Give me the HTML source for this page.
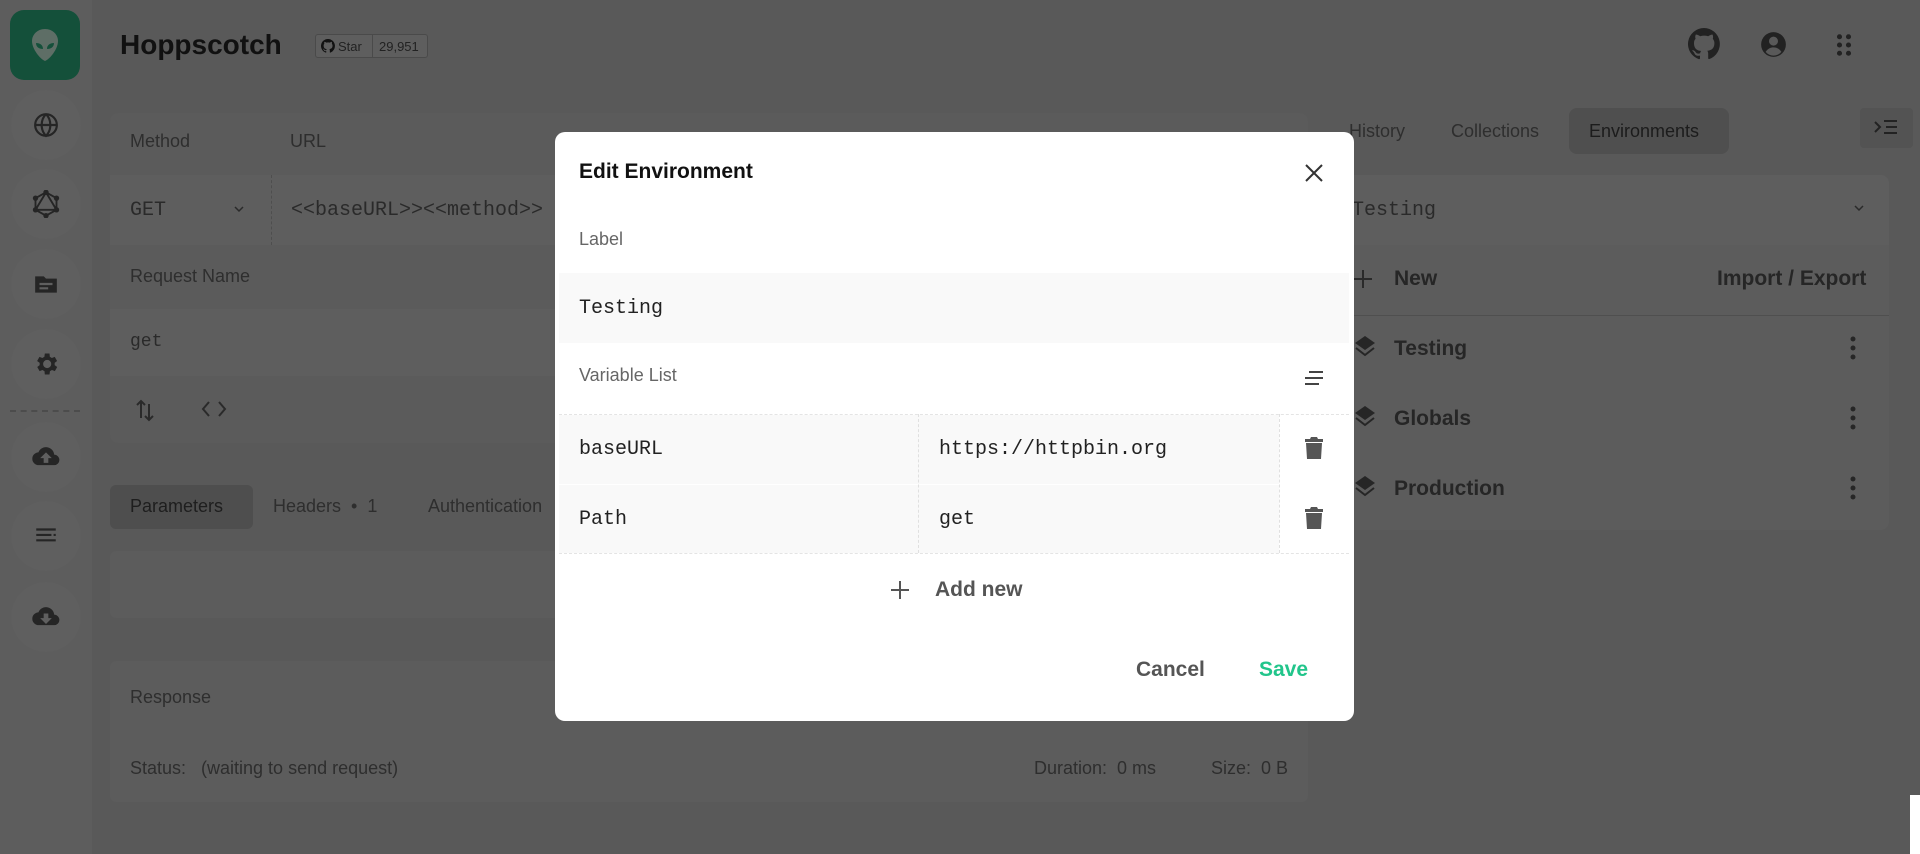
<!DOCTYPE html>
<html><head><meta charset="utf-8"><style>
*{box-sizing:border-box;margin:0;padding:0}
body{width:1920px;height:854px;overflow:hidden;background:#595959;font-family:"Liberation Sans",sans-serif;position:relative;color:#222}
.a{position:absolute}
.mono{font-family:"Liberation Mono",monospace}
.side{left:0;top:0;width:92px;height:854px;background:#5d5d5d}
.circ{left:11px;width:70px;height:70px;border-radius:50%;background:#5f5f5f;display:flex;align-items:center;justify-content:center}
.lbl{color:#2e2e2e;font-size:18px}
.txt{color:#2a2a2a}
</style></head><body>
<div class="a side"></div>
<div class="a" style="left:10px;top:10px;width:70px;height:70px;border-radius:14px;background:#14503a;display:flex;align-items:center;justify-content:center">
<svg width="30" height="34" viewBox="0 0 30 34"><path d="M15 1C7 1 2 7 2 13c0 8 8 18 13 20 5-2 13-12 13-20C28 7 23 1 15 1z" fill="#5e6e66"/><path d="M6 15c4 0 7 2 7 6-4 0-7-2-7-6zM24 15c-4 0-7 2-7 6 4 0 7-2 7-6z" fill="#14503a"/></svg></div>
<div class="a circ" style="top:90px"><svg width="26" height="26" viewBox="0 0 24 24" fill="none" stroke="#252525" stroke-width="2"><circle cx="12" cy="12" r="10"/><path d="M2 12h20M12 2c3 3 4 6 4 10s-1 7-4 10c-3-3-4-6-4-10s1-7 4-10"/></svg></div>
<div class="a circ" style="top:169px"><svg width="28" height="28" viewBox="0 0 24 24" fill="none" stroke="#252525" stroke-width="1.6"><path d="M12 2l9 5v10l-9 5-9-5V7zM12 2L3 17h18z"/><circle cx="12" cy="2" r="1.5" fill="#252525"/><circle cx="21" cy="7" r="1.5" fill="#252525"/><circle cx="21" cy="17" r="1.5" fill="#252525"/><circle cx="12" cy="22" r="1.5" fill="#252525"/><circle cx="3" cy="17" r="1.5" fill="#252525"/><circle cx="3" cy="7" r="1.5" fill="#252525"/></svg></div>
<div class="a circ" style="top:249px"><svg width="26" height="26" viewBox="0 0 24 24"><path d="M2 5h8l2 2h10v13H2z" fill="#252525"/><path d="M6 12h12M6 16h8" stroke="#5f5f5f" stroke-width="2"/></svg></div>
<div class="a circ" style="top:329px"><svg width="28" height="28" viewBox="0 0 24 24"><path fill="#252525" d="M19.4 13a7.5 7.5 0 000-2l2.1-1.6-2-3.5-2.5 1a7 7 0 00-1.7-1L15 3h-4l-.4 2.9a7 7 0 00-1.7 1l-2.5-1-2 3.5L6.6 11a7.5 7.5 0 000 2l-2.1 1.6 2 3.5 2.5-1a7 7 0 001.7 1L11 21h4l.4-2.9a7 7 0 001.7-1l2.5 1 2-3.5zM13 15.5a3.5 3.5 0 110-7 3.5 3.5 0 010 7z"/></svg></div>
<div class="a" style="left:10px;top:410px;width:70px;border-top:2px dashed #4c4c4c"></div>
<div class="a circ" style="top:422px"><svg width="28" height="28" viewBox="0 0 24 24"><path fill="#252525" d="M19 10a7 7 0 00-13.5-2A5.5 5.5 0 006 19h13a4.5 4.5 0 000-9zm-5 3v4h-4v-4H7l5-5 5 5z"/></svg></div>
<div class="a circ" style="top:501px"><svg width="26" height="26" viewBox="0 0 24 24" stroke="#252525" stroke-width="2"><path d="M3 6h18M3 11h14M3 16h18M19 11h2"/></svg></div>
<div class="a circ" style="top:582px"><svg width="28" height="28" viewBox="0 0 24 24"><path fill="#252525" d="M19 10a7 7 0 00-13.5-2A5.5 5.5 0 006 19h13a4.5 4.5 0 000-9zm-7 8l-5-5h3V9h4v4h3z"/></svg></div>

<div class="a" style="left:120px;top:29px;font-size:28px;font-weight:bold;color:#111">Hoppscotch</div>
<div class="a" style="left:315px;top:34px;width:113px;height:24px;border:1px solid #4a4a4a;border-radius:3px;background:#5e5e5e;font-size:13px;color:#222;display:flex">
<div style="width:57px;border-right:1px solid #4a4a4a;display:flex;align-items:center;padding-left:5px;gap:3px"><svg width="14" height="14" viewBox="0 0 16 16"><path fill="#111" d="M8 0a8 8 0 00-2.5 15.6c.4 0 .5-.2.5-.4v-1.4c-2.2.5-2.7-1-2.7-1-.4-.9-.9-1.2-.9-1.2-.7-.5.1-.5.1-.5.8.1 1.2.8 1.2.8.7 1.3 1.9.9 2.4.7 0-.5.3-.9.5-1.1-1.8-.2-3.6-.9-3.6-4 0-.9.3-1.6.8-2.1-.1-.2-.4-1 .1-2.1 0 0 .7-.2 2.2.8a7.5 7.5 0 014 0c1.5-1 2.2-.8 2.2-.8.4 1.1.2 1.9.1 2.1.5.6.8 1.300.8 2.1 0 3.1-1.9 3.7-3.6 3.9.3.3.5.8.5 1.5v2.2c0 .2.1.5.6.4A8 8 0 008 0z"/></svg>Star</div>
<div style="display:flex;align-items:center;padding-left:6px">29,951</div></div>

<svg class="a" style="left:1688px;top:28px" width="32" height="32" viewBox="0 0 16 16"><path fill="#222" d="M8 0a8 8 0 00-2.5 15.6c.4 0 .5-.2.5-.4v-1.4c-2.2.5-2.7-1-2.7-1-.4-.9-.9-1.2-.9-1.2-.7-.5.1-.5.1-.5.8.1 1.2.8 1.2.8.7 1.3 1.9.9 2.4.7 0-.5.3-.9.5-1.1-1.8-.2-3.6-.9-3.6-4 0-.9.3-1.6.8-2.1-.1-.2-.4-1 .1-2.1 0 0 .7-.2 2.2.8a7.5 7.5 0 014 0c1.5-1 2.2-.8 2.2-.8.4 1.1.2 1.9.1 2.1.5.6.8 1.3.8 2.1 0 3.1-1.9 3.7-3.6 3.9.3.3.5.8.5 1.5v2.2c0 .2.1.5.6.4A8 8 0 008 0z"/></svg>
<svg class="a" style="left:1760px;top:31px" width="27" height="27" viewBox="0 0 24 24"><circle cx="12" cy="12" r="11" fill="#222"/><circle cx="12" cy="9" r="4" fill="#595959"/><path d="M5 18.5c2-3 4.5-4 7-4s5 1 7 4a9 9 0 01-14 0z" fill="#595959"/></svg>
<svg class="a" style="left:1835px;top:33px" width="18" height="24" viewBox="0 0 12 16" fill="#222"><circle cx="3" cy="2.5" r="1.7"/><circle cx="9" cy="2.5" r="1.7"/><circle cx="3" cy="8" r="1.7"/><circle cx="9" cy="8" r="1.7"/><circle cx="3" cy="13.5" r="1.7"/><circle cx="9" cy="13.5" r="1.7"/></svg>

<div class="a" style="left:110px;top:113px;width:1198px;height:330px;border-radius:8px;background:#5b5b5b"></div>
<div class="a lbl" style="left:130px;top:131px">Method</div>
<div class="a lbl" style="left:290px;top:131px">URL</div>
<div class="a" style="left:110px;top:175px;width:1198px;height:70px;background:#5e5e5e"></div>
<div class="a" style="left:271px;top:175px;height:70px;border-left:1px dashed #4e4e4e"></div>
<div class="a mono txt" style="left:130px;top:199px;font-size:20px">GET</div>
<svg class="a" style="left:233px;top:205px" width="12" height="8" viewBox="0 0 12 8" fill="none" stroke="#2a2a2a" stroke-width="1.5"><path d="M2 2l4 4 4-4"/></svg>
<div class="a mono txt" style="left:291px;top:199px;font-size:20px">&lt;&lt;baseURL&gt;&gt;&lt;&lt;method&gt;&gt;</div>
<div class="a lbl" style="left:130px;top:266px">Request Name</div>
<div class="a" style="left:110px;top:309px;width:1198px;height:67px;background:#5e5e5e"></div>
<div class="a mono txt" style="left:130px;top:332px;font-size:18px">get</div>
<svg class="a" style="left:135px;top:398px" width="20" height="24" viewBox="0 0 20 24" fill="none" stroke="#2a2a2a" stroke-width="2"><path d="M6 20V3M2 7l4-4 4 4M14 6v16M10 18l4 4 4-4"/></svg>
<svg class="a" style="left:201px;top:400px" width="26" height="18" viewBox="0 0 26 18" fill="none" stroke="#2a2a2a" stroke-width="2"><path d="M8 2L2 9l6 7M18 2l6 7-6 7"/></svg>

<div class="a" style="left:110px;top:485px;width:143px;height:44px;border-radius:6px;background:#4e4e4e"></div>
<div class="a" style="left:130px;top:496px;font-size:18px;color:#1e1e1e">Parameters</div>
<div class="a lbl" style="left:273px;top:496px">Headers &nbsp;•&nbsp; 1</div>
<div class="a lbl" style="left:428px;top:496px">Authentication</div>
<div class="a" style="left:110px;top:551px;width:1198px;height:67px;background:#5c5c5c;border-radius:6px"></div>
<div class="a" style="left:110px;top:661px;width:1198px;height:141px;background:#5c5c5c;border-radius:6px"></div>
<div class="a lbl" style="left:130px;top:687px">Response</div>
<div class="a lbl" style="left:130px;top:758px">Status: &nbsp;&nbsp;(waiting to send request)</div>
<div class="a lbl" style="left:1034px;top:758px">Duration: &nbsp;0 ms</div>
<div class="a lbl" style="left:1211px;top:758px">Size: &nbsp;0 B</div>

<div class="a lbl" style="left:1349px;top:121px">History</div>
<div class="a lbl" style="left:1451px;top:121px">Collections</div>
<div class="a" style="left:1569px;top:108px;width:160px;height:46px;border-radius:8px;background:#4f4f4f"></div>
<div class="a" style="left:1589px;top:121px;font-size:18px;color:#1c1c1c">Environments</div>
<div class="a" style="left:1860px;top:108px;width:53px;height:40px;border-radius:4px;background:#535353"></div>
<svg class="a" style="left:1873px;top:118px" width="26" height="20" viewBox="0 0 26 20" fill="none" stroke="#222" stroke-width="2"><path d="M2 4l5 5-5 5M11 3h13M13 9h11M11 15h13"/></svg>
<div class="a" style="left:1910px;top:795px;width:10px;height:59px;background:#fff"></div>

<div class="a" style="left:1341px;top:175px;width:548px;height:355px;border-radius:8px;background:#5c5c5c"></div>
<div class="a" style="left:1341px;top:175px;width:548px;height:70px;background:#5e5e5e;border-radius:8px 8px 0 0"></div>
<div class="a mono txt" style="left:1352px;top:199px;font-size:20px">Testing</div>
<svg class="a" style="left:1853px;top:204px" width="12" height="8" viewBox="0 0 12 8" fill="none" stroke="#2a2a2a" stroke-width="1.5"><path d="M2 2l4 4 4-4"/></svg>
<svg class="a" style="left:1353px;top:269px" width="20" height="20" viewBox="0 0 20 20" stroke="#2a2a2a" stroke-width="2"><path d="M10 1v18M1 10h18"/></svg>
<div class="a" style="left:1394px;top:267px;font-size:21px;font-weight:bold;color:#262626">New</div>
<div class="a" style="left:1717px;top:267px;font-size:21px;font-weight:bold;color:#262626">Import / Export</div>
<div class="a" style="left:1341px;top:315px;width:548px;border-top:1px solid #4f4f4f"></div>
<svg class="a" style="left:1354px;top:335px" width="22" height="24" viewBox="0 0 22 24"><path d="M11 1l10 7-10 7L1 8z" fill="#262626"/><path d="M2 13l9 7 9-7" fill="none" stroke="#262626" stroke-width="2"/></svg>
<svg class="a" style="left:1354px;top:405px" width="22" height="24" viewBox="0 0 22 24"><path d="M11 1l10 7-10 7L1 8z" fill="#262626"/><path d="M2 13l9 7 9-7" fill="none" stroke="#262626" stroke-width="2"/></svg>
<svg class="a" style="left:1354px;top:475px" width="22" height="24" viewBox="0 0 22 24"><path d="M11 1l10 7-10 7L1 8z" fill="#262626"/><path d="M2 13l9 7 9-7" fill="none" stroke="#262626" stroke-width="2"/></svg>
<div class="a" style="left:1394px;top:337px;font-size:21px;font-weight:bold;color:#262626">Testing</div>
<div class="a" style="left:1394px;top:407px;font-size:21px;font-weight:bold;color:#262626">Globals</div>
<div class="a" style="left:1394px;top:477px;font-size:21px;font-weight:bold;color:#262626">Production</div>
<svg class="a" style="left:1850px;top:336px" width="6" height="24" viewBox="0 0 6 24" fill="#262626"><circle cx="3" cy="3" r="2.5"/><circle cx="3" cy="12" r="2.5"/><circle cx="3" cy="21" r="2.5"/></svg>
<svg class="a" style="left:1850px;top:406px" width="6" height="24" viewBox="0 0 6 24" fill="#262626"><circle cx="3" cy="3" r="2.5"/><circle cx="3" cy="12" r="2.5"/><circle cx="3" cy="21" r="2.5"/></svg>
<svg class="a" style="left:1850px;top:476px" width="6" height="24" viewBox="0 0 6 24" fill="#262626"><circle cx="3" cy="3" r="2.5"/><circle cx="3" cy="12" r="2.5"/><circle cx="3" cy="21" r="2.5"/></svg>

<div class="a" style="left:555px;top:132px;width:799px;height:589px;background:#fff;border-radius:10px;overflow:hidden">
 <div class="a" style="left:24px;top:28px;font-size:21px;font-weight:bold;color:#111">Edit Environment</div>
 <svg class="a" style="left:749px;top:31px" width="20" height="20" viewBox="0 0 20 20" stroke="#333" stroke-width="2"><path d="M2 2l16 16M18 2L2 18"/></svg>
 <div class="a" style="left:24px;top:97px;font-size:18px;color:#666">Label</div>
 <div class="a" style="left:4px;top:141px;width:790px;height:70px;background:#f9f9f9"></div>
 <div class="a mono" style="left:24px;top:165px;font-size:20px;color:#222">Testing</div>
 <div class="a" style="left:24px;top:233px;font-size:18px;color:#666">Variable List</div>
 <svg class="a" style="left:748px;top:238px" width="22" height="16" viewBox="0 0 22 16" stroke="#444" stroke-width="2"><path d="M6 2h14M2 8h18M2 14h14"/></svg>
 <div class="a" style="left:4px;top:282px;width:790px;border-top:1px dashed #e4e4e4"></div>
 <div class="a" style="left:4px;top:283px;width:720px;height:69px;background:#f9f9f9"></div>
 <div class="a" style="left:4px;top:353px;width:720px;height:68px;background:#f9f9f9"></div>
 <div class="a" style="left:4px;top:421px;width:790px;border-top:1px dashed #e4e4e4"></div>
 <div class="a" style="left:363px;top:282px;height:139px;border-left:1px dashed #e0e0e0"></div>
 <div class="a" style="left:724px;top:282px;height:139px;border-left:1px dashed #e0e0e0"></div>
 <div class="a mono" style="left:24px;top:306px;font-size:20px;color:#222">baseURL</div>
 <div class="a mono" style="left:384px;top:306px;font-size:20px;color:#222">https://httpbin.org</div>
 <div class="a mono" style="left:24px;top:376px;font-size:20px;color:#222">Path</div>
 <div class="a mono" style="left:384px;top:376px;font-size:20px;color:#222">get</div>
 <svg class="a" style="left:750px;top:304px" width="18" height="24" viewBox="0 0 18 24" fill="#555"><path d="M6 1h6l1 2h5v3H0V3h5zM1 7h16l-1 16H2z"/></svg>
 <svg class="a" style="left:750px;top:374px" width="18" height="24" viewBox="0 0 18 24" fill="#555"><path d="M6 1h6l1 2h5v3H0V3h5zM1 7h16l-1 16H2z"/></svg>
 <svg class="a" style="left:335px;top:448px" width="20" height="20" viewBox="0 0 20 20" stroke="#555" stroke-width="2"><path d="M10 1v18M1 10h18"/></svg>
 <div class="a" style="left:380px;top:446px;font-size:21px;font-weight:bold;color:#555">Add new</div>
 <div class="a" style="left:581px;top:526px;font-size:21px;font-weight:bold;color:#555">Cancel</div>
 <div class="a" style="left:704px;top:526px;font-size:21px;font-weight:bold;color:#22c58b">Save</div>
</div>
</body></html>
